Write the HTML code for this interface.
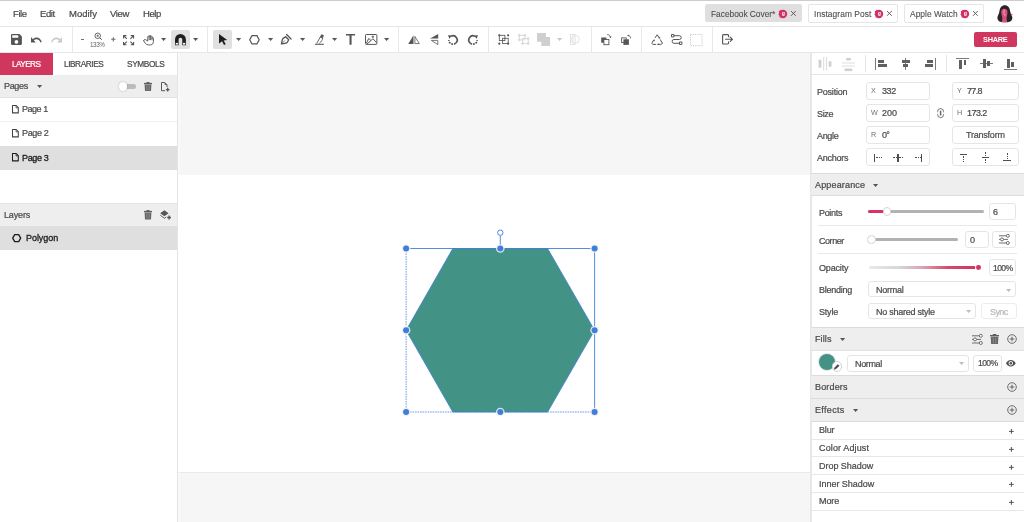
<!DOCTYPE html>
<html>
<head>
<meta charset="utf-8">
<title>Designer</title>
<style>
*{box-sizing:border-box;margin:0;padding:0}
html,body{width:1024px;height:522px;overflow:hidden;background:#fff;font-family:"Liberation Sans",sans-serif;font-size:9px;color:#444}
#app{position:relative;width:1024px;height:522px;overflow:hidden;background:#fff}
.abs{position:absolute}
.t{position:absolute;white-space:nowrap;will-change:transform;line-height:12px;height:12px;-webkit-text-stroke:0.22px currentColor}
svg{position:absolute;overflow:visible}
</style>
</head>
<body>
<div id="app">
<!-- MENU BAR -->
<div class="abs" style="left:0.00px;top:0.00px;width:1024.00px;height:1.00px;background:#cdcdcd;"></div>
<span class="t" style="left:12.80px;top:8.00px;font-size:9.50px;color:#4a4a4a;font-weight:400;letter-spacing:-0.402px;">File</span>
<span class="t" style="left:40.40px;top:8.00px;font-size:9.50px;color:#4a4a4a;font-weight:400;letter-spacing:-0.423px;">Edit</span>
<span class="t" style="left:68.90px;top:8.00px;font-size:9.50px;color:#4a4a4a;font-weight:400;letter-spacing:-0.016px;">Modify</span>
<span class="t" style="left:110.20px;top:8.00px;font-size:9.50px;color:#4a4a4a;font-weight:400;letter-spacing:-0.373px;">View</span>
<span class="t" style="left:142.70px;top:8.00px;font-size:9.50px;color:#4a4a4a;font-weight:400;letter-spacing:-0.412px;">Help</span>
<div class="abs" style="left:0.00px;top:26.00px;width:1024.00px;height:1.00px;background:#e6e6e6;"></div>
<!-- DOC TABS -->
<div class="abs" style="left:705.00px;top:4.30px;width:97.00px;height:18.20px;background:#dfdfdf;border-radius:2px"></div>
<span class="t" style="left:711.00px;top:7.50px;font-size:8.40px;color:#4d4d4d;font-weight:400;letter-spacing:-0.028px;-webkit-text-stroke:0.100px #4d4d4d;">Facebook Cover*</span>
<svg style="left:778.30px;top:8.50px;will-change:transform;" width="10.00" height="10.00" viewBox="-5 -5 10 10"><circle r="4.200" fill="#d22f62"/><circle cx="-3.300" cy="-2.400" r="0.900" fill="#d22f62"/><circle cx="-3.800" cy="0.600" r="0.700" fill="#d22f62"/><circle cx="-2.100" cy="-3.600" r="0.700" fill="#d22f62"/><circle cx="-2.900" cy="2.900" r="0.600" fill="#d22f62"/><text x="0.200" y="1.300" font-family="Liberation Sans, sans-serif" font-size="5.200" font-weight="700" fill="#fff" text-anchor="middle">g</text></svg>
<svg style="left:791.00px;top:11.40px;" width="4.80" height="4.80" viewBox="0 0 4.8 4.8"><path d="M0 0L4.800 4.800M4.800 0L0 4.800" stroke="#555" stroke-width="0.900" fill="none"/></svg>
<div class="abs" style="left:808.00px;top:4.30px;width:90.10px;height:18.50px;background:#fff;border:1px solid #e5e5e5;border-radius:2px;"></div>
<span class="t" style="left:814.00px;top:7.50px;font-size:8.40px;color:#4d4d4d;font-weight:400;letter-spacing:0.078px;-webkit-text-stroke:0.100px #4d4d4d;">Instagram Post</span>
<svg style="left:874.00px;top:8.50px;will-change:transform;" width="10.00" height="10.00" viewBox="-5 -5 10 10"><circle r="4.200" fill="#d22f62"/><circle cx="-3.300" cy="-2.400" r="0.900" fill="#d22f62"/><circle cx="-3.800" cy="0.600" r="0.700" fill="#d22f62"/><circle cx="-2.100" cy="-3.600" r="0.700" fill="#d22f62"/><circle cx="-2.900" cy="2.900" r="0.600" fill="#d22f62"/><text x="0.200" y="1.300" font-family="Liberation Sans, sans-serif" font-size="5.200" font-weight="700" fill="#fff" text-anchor="middle">g</text></svg>
<svg style="left:886.60px;top:11.40px;" width="4.80" height="4.80" viewBox="0 0 4.8 4.8"><path d="M0 0L4.800 4.800M4.800 0L0 4.800" stroke="#555" stroke-width="0.900" fill="none"/></svg>
<div class="abs" style="left:903.50px;top:4.30px;width:80.60px;height:18.50px;background:#fff;border:1px solid #e5e5e5;border-radius:2px;"></div>
<span class="t" style="left:910.00px;top:7.50px;font-size:8.40px;color:#4d4d4d;font-weight:400;letter-spacing:0.039px;-webkit-text-stroke:0.100px #4d4d4d;">Apple Watch</span>
<svg style="left:960.30px;top:8.50px;will-change:transform;" width="10.00" height="10.00" viewBox="-5 -5 10 10"><circle r="4.200" fill="#d22f62"/><circle cx="-3.300" cy="-2.400" r="0.900" fill="#d22f62"/><circle cx="-3.800" cy="0.600" r="0.700" fill="#d22f62"/><circle cx="-2.100" cy="-3.600" r="0.700" fill="#d22f62"/><circle cx="-2.900" cy="2.900" r="0.600" fill="#d22f62"/><text x="0.200" y="1.300" font-family="Liberation Sans, sans-serif" font-size="5.200" font-weight="700" fill="#fff" text-anchor="middle">g</text></svg>
<svg style="left:973.10px;top:11.40px;" width="4.80" height="4.80" viewBox="0 0 4.8 4.8"><path d="M0 0L4.800 4.800M4.800 0L0 4.800" stroke="#555" stroke-width="0.900" fill="none"/></svg>
<svg style="left:997.00px;top:4.80px;" width="16.00" height="17.40" viewBox="0 0 16 17.400"><path d="M7.800 0.200C4.800 0.200 2.900 2.600 2.500 6C2.200 9 0.400 10.500 0.400 12.800C0.400 15.400 2.600 17.200 5 17.200L10.600 17.200C13.400 17.200 15.400 15.400 15.400 12.800C15.400 10.500 13.400 9 13.100 6C12.700 2.600 10.800 0.200 7.800 0.200z" fill="#2b2224"/><path d="M4.300 6.200C4.600 4.300 6 3.700 7.600 3.700C9.500 3.700 10.600 5 10.500 7.200C10.400 9.600 9.800 11.400 9.600 13C9.500 14.600 10.200 15.800 10 16.900C8.200 17.300 6.400 17.300 4.600 16.800C5.200 15.400 5.600 13.800 5.200 12.200C4.800 10.400 4 8.400 4.300 6.200z" fill="#d75079"/><path d="M6.200 5.200L8.200 4.600L7.600 8.400L9.200 9.800L7.400 11L6.400 8.600z" fill="#e98aa8"/><circle cx="14.700" cy="9.600" r="0.900" fill="#e0668a"/></svg>
<!-- TOOLBAR -->
<div class="abs" style="left:0.00px;top:52.00px;width:1024.00px;height:1.00px;background:#e6e6e6;"></div>
<div class="abs" style="left:71.80px;top:27.00px;width:1.00px;height:25.00px;background:#e8e8e8;"></div>
<div class="abs" style="left:207.30px;top:27.00px;width:1.00px;height:25.00px;background:#e8e8e8;"></div>
<div class="abs" style="left:397.80px;top:27.00px;width:1.00px;height:25.00px;background:#e8e8e8;"></div>
<div class="abs" style="left:487.80px;top:27.00px;width:1.00px;height:25.00px;background:#e8e8e8;"></div>
<div class="abs" style="left:590.70px;top:27.00px;width:1.00px;height:25.00px;background:#e8e8e8;"></div>
<div class="abs" style="left:640.90px;top:27.00px;width:1.00px;height:25.00px;background:#e8e8e8;"></div>
<div class="abs" style="left:711.70px;top:27.00px;width:1.00px;height:25.00px;background:#e8e8e8;"></div>
<svg style="left:11.20px;top:34.10px" width="10.90" height="11.00" viewBox="3 3 18 18" preserveAspectRatio="none"><path d="M17 3H5c-1.110 0-2 .9-2 2v14c0 1.100.890 2 2 2h14c1.100 0 2-.9 2-2V7l-4-4zm-5 16c-1.660 0-3-1.340-3-3s1.340-3 3-3 3 1.340 3 3-1.340 3-3 3zm3-10H5V5h10v4z" fill="#565656"/></svg>
<svg style="left:31.00px;top:37.00px" width="10.80" height="5.80" viewBox="2 7 20.5 9.5" preserveAspectRatio="none"><path d="M12.500 8c-2.650 0-5.050.990-6.900 2.600L2 7v9h9l-3.620-3.620c1.390-1.160 3.160-1.880 5.120-1.880 3.540 0 6.550 2.310 7.600 5.500l2.370-.780C21.080 11.030 17.150 8 12.500 8z" fill="#565656"/></svg>
<svg style="left:51.20px;top:37.00px" width="11.00" height="5.80" viewBox="1.5 7 20.5 9.5" preserveAspectRatio="none"><path d="M18.400 10.600C16.550 8.990 14.150 8 11.500 8c-4.650 0-8.580 3.030-9.960 7.220L3.900 16c1.050-3.190 4.050-5.500 7.600-5.500 1.950 0 3.730.720 5.120 1.880L13 16h9V7l-3.600 3.600z" fill="#c9c9c9"/></svg>
<div class="abs" style="left:81.20px;top:39.00px;width:3.20px;height:1.10px;background:#707070;"></div>
<svg style="left:93.50px;top:31.50px;" width="9.00" height="9.00" viewBox="0 0 9 9"><circle cx="3.700" cy="3.800" r="2.750" fill="none" stroke="#565656" stroke-width="0.900"/><path d="M5.700 5.800L7.800 7.700" stroke="#565656" stroke-width="1"/><path d="M2.400 3.800h2.600M3.700 2.500v2.600" stroke="#565656" stroke-width="0.700"/></svg>
<span class="t" style="left:90.20px;top:38.90px;font-size:6.30px;color:#666;font-weight:400;letter-spacing:-0.437px;-webkit-text-stroke:0;">133%</span>
<svg style="left:110.90px;top:37.40px;" width="4.60" height="4.60" viewBox="0 0 4.600 4.600"><path d="M2.300 0.200v4.200M0.200 2.300h4.200" stroke="#6a6a6a" stroke-width="1.050"/></svg>
<svg style="left:122.80px;top:34.60px;" width="11.20" height="10.40" viewBox="0 0 11.200 10.400"><g stroke="#565656" stroke-width="1.100" fill="none"><path d="M0.600 3.400V0.600H3.400M0.600 0.600L3.800 3.800"/><path d="M10.600 3.400V0.600H7.800M10.600 0.600L7.400 3.800"/><path d="M0.600 7V9.800H3.400M0.600 9.800L3.800 6.600"/><path d="M10.600 7V9.800H7.800M10.600 9.800L7.400 6.600"/></g></svg>
<svg style="left:142.90px;top:34.50px;" width="11.00" height="10.40" viewBox="0 0 11 10.400"><path d="M0.700 5.700C1.500 7.500 2.800 9.800 5.200 9.900H7.600C9.400 9.900 10.400 8.400 10.400 6.600V3.100C10.400 2.200 9 2.200 9 3.100V4.900M9 3.100V1.700C9 0.800 7.600 0.800 7.600 1.700V4.700M7.600 1.700V1.100C7.600 0.200 6.200 0.200 6.200 1.100V4.700M6.200 1.700C6.200 0.800 4.800 0.800 4.800 1.700V6.100L2.700 4.700C1.900 4.200 0.300 4.800 0.700 5.700" fill="none" stroke="#565656" stroke-width="0.950" stroke-linecap="round" stroke-linejoin="round"/></svg>
<svg style="left:161.40px;top:38.10px;" width="5.20" height="3.00" viewBox="0 0 5.2 3"><path d="M0 0h5.2L2.600 3z" fill="#555"/></svg>
<div class="abs" style="left:171.00px;top:30.00px;width:18.60px;height:19.00px;background:#e0e0e0;border-radius:2px"></div>
<svg style="left:174.70px;top:34.10px;" width="10.90" height="11.20" viewBox="0 0 10.900 11.200"><path d="M0 11.200V5.450a5.450 5.450 0 0 1 10.900 0V11.200H7.300V5.600a1.850 1.850 0 0 0-3.700 0V11.200z" fill="#1e1e1e"/><rect x="0.700" y="8.900" width="2.200" height="1.700" fill="#fff"/><rect x="8" y="8.900" width="2.200" height="1.700" fill="#fff"/></svg>
<svg style="left:193.40px;top:38.10px;" width="5.20" height="3.00" viewBox="0 0 5.2 3"><path d="M0 0h5.2L2.600 3z" fill="#555"/></svg>
<div class="abs" style="left:213.40px;top:30.00px;width:18.80px;height:19.00px;background:#e0e0e0;border-radius:2px"></div>
<svg style="left:218.90px;top:34.10px;" width="8.20" height="11.00" viewBox="0 0 8.200 11"><path d="M0 0L8.200 6.100L4.700 6.600L6.700 10.300L5 11L3.100 7.300L0 9.400z" fill="#1e1e1e"/></svg>
<svg style="left:235.80px;top:38.10px;" width="5.20" height="3.00" viewBox="0 0 5.2 3"><path d="M0 0h5.2L2.600 3z" fill="#555"/></svg>
<svg style="left:249.40px;top:34.90px;" width="10.90" height="9.60" viewBox="0 0 10.900 9.600"><path d="M3 0.650H7.900L10.200 4.800L7.900 8.950H3L0.700 4.800z" fill="none" stroke="#565656" stroke-width="1.250" stroke-linejoin="round"/></svg>
<svg style="left:267.90px;top:38.10px;" width="5.20" height="3.00" viewBox="0 0 5.2 3"><path d="M0 0h5.2L2.600 3z" fill="#555"/></svg>
<svg style="left:281.30px;top:34.20px;" width="10.60" height="10.40" viewBox="0 0 10.600 10.400"><g fill="none" stroke="#565656" stroke-linejoin="round" stroke-linecap="round"><path d="M5.600 0.500L10.100 5" stroke-width="1.250"/><path d="M0.500 9.900C0.800 7 1.300 5.200 2 4.300L4.700 2.800L7.700 5.800L6.200 8.500C5.300 9.200 3.400 9.600 0.500 9.900z" stroke-width="1.350"/><path d="M0.500 9.900L3.700 6.700" stroke-width="0.800"/></g></svg>
<svg style="left:299.90px;top:38.10px;" width="5.20" height="3.00" viewBox="0 0 5.2 3"><path d="M0 0h5.2L2.600 3z" fill="#555"/></svg>
<svg style="left:314.50px;top:34.20px;" width="9.20" height="10.80" viewBox="0 0 9.200 10.800"><g fill="none" stroke="#565656" stroke-linejoin="round"><path d="M0 10.300H8.800" stroke-width="1.100"/><path d="M1.700 9.400L5.300 3L7.500 4C7.700 5.700 6.500 7.600 4.300 9.400" stroke-width="0.900"/><path d="M5.300 3L6.600 0.500L8.600 1.500L7.500 4z" fill="#565656" stroke-width="0.600"/></g></svg>
<svg style="left:331.90px;top:38.10px;" width="5.20" height="3.00" viewBox="0 0 5.2 3"><path d="M0 0h5.2L2.600 3z" fill="#555"/></svg>
<svg style="left:346.30px;top:34.30px;" width="9.10" height="10.70" viewBox="0 0 9.100 10.700"><path d="M0 0H9.100V1.600H5.600V10.700H3.500V1.600H0z" fill="#565656"/></svg>
<svg style="left:364.60px;top:34.10px;" width="12.40" height="10.90" viewBox="0 0 12.400 10.900"><g fill="none" stroke="#565656" stroke-width="1" stroke-linejoin="round"><rect x="0.500" y="0.500" width="11.400" height="9.900" rx="0.800"/><path d="M1.200 9.600L3.800 4.400L6 6.600L1.900 10M6 6.600L7.900 4.700L11.600 8.800"/><circle cx="7.900" cy="2.700" r="0.800"/></g></svg>
<svg style="left:383.80px;top:38.10px;" width="5.20" height="3.00" viewBox="0 0 5.2 3"><path d="M0 0h5.2L2.600 3z" fill="#555"/></svg>
<svg style="left:407.90px;top:35.00px;" width="12.20" height="9.20" viewBox="0 0 12.200 9.200"><path d="M0.200 9H5.500V0.300z" fill="#565656"/><path d="M6.900 1.500V8.600H11.300z" fill="none" stroke="#565656" stroke-width="0.800" stroke-linejoin="round"/></svg>
<svg style="left:430.20px;top:33.70px;" width="8.30" height="11.20" viewBox="0 0 8.300 11.200"><path d="M8.200 0V4.600H0z" fill="#565656"/><path d="M7.800 6.400V10.600L1.400 6.400z" fill="none" stroke="#565656" stroke-width="0.800" stroke-linejoin="round"/></svg>
<svg style="left:447.20px;top:34.40px;" width="12.00" height="12.00" viewBox="-6 -6 12 12"><g><path d="M-1.800 -3.750A4.150 4.150 0 0 1 2.700 3.150" fill="none" stroke="#565656" stroke-width="1.650"/><path d="M2.700 3.150A4.150 4.150 0 0 1 -4.150 0" fill="none" stroke="#565656" stroke-width="1.650" stroke-dasharray="1.900 0.900"/><path d="M-4.800 -5.100L-0.800 -4.300L-3.900 -1.300z" fill="#565656"/></g></svg>
<svg style="left:467.20px;top:34.40px;" width="12.00" height="12.00" viewBox="-6 -6 12 12"><g transform="scale(-1 1)"><path d="M-1.800 -3.750A4.150 4.150 0 0 1 2.700 3.150" fill="none" stroke="#565656" stroke-width="1.650"/><path d="M2.700 3.150A4.150 4.150 0 0 1 -4.150 0" fill="none" stroke="#565656" stroke-width="1.650" stroke-dasharray="1.900 0.900"/><path d="M-4.800 -5.100L-0.800 -4.300L-3.900 -1.300z" fill="#565656"/></g></svg>
<svg style="left:498.00px;top:34.30px;" width="11.40" height="11.00" viewBox="0 0 11.400 11"><g fill="none" stroke="#565656" stroke-width="0.850"><rect x="1.300" y="1.300" width="5.600" height="5.300"/><rect x="4.600" y="4.300" width="5.600" height="5.300"/></g><g fill="#565656"><circle cx="1.300" cy="1.300" r="1.100"/><circle cx="10.100" cy="1.300" r="1.100"/><circle cx="1.300" cy="9.700" r="1.100"/><circle cx="10.100" cy="9.700" r="1.100"/></g></svg>
<svg style="left:518.00px;top:34.30px;" width="11.40" height="11.00" viewBox="0 0 11.400 11"><g fill="none" stroke="#d3d3d3" stroke-width="0.800"><rect x="1.300" y="1.300" width="5.600" height="4.600"/><rect x="4.600" y="4.600" width="5.600" height="4.900"/><circle cx="1.300" cy="1.300" r="1"/><circle cx="6.900" cy="1.300" r="1"/><circle cx="1.300" cy="5.900" r="1"/><circle cx="10.200" cy="4.600" r="1"/><circle cx="4.600" cy="9.500" r="1"/><circle cx="10.200" cy="9.500" r="1"/></g></svg>
<svg style="left:537.10px;top:33.10px;" width="13.10" height="12.90" viewBox="0 0 13.100 12.900"><path d="M0 0H8.900V4.100H13.100V12.900H4.300V8.700H0z" fill="#cfcfcf"/></svg>
<svg style="left:556.70px;top:38.10px;" width="5.20" height="3.00" viewBox="0 0 5.2 3"><path d="M0 0h5.2L2.600 3z" fill="#c6c6c6"/></svg>
<svg style="left:570.30px;top:34.30px;" width="9.80" height="10.80" viewBox="0 0 9.800 10.800"><g fill="none" stroke="#dcdcdc" stroke-width="0.800"><rect x="0.500" y="0.500" width="4.600" height="9.800"/><circle cx="5.300" cy="5.400" r="4"/><path d="M3 2.200V8.600"/></g></svg>
<svg style="left:600.80px;top:33.90px;" width="10.40" height="11.10" viewBox="0 0 10.400 11.100"><rect x="0.200" y="3.500" width="5.200" height="5.200" fill="#565656"/><rect x="2.900" y="5.500" width="5" height="5.200" fill="#fff" stroke="#565656" stroke-width="0.900"/><path d="M6.200 0.600C8 0.600 9.200 1.600 9.500 3.200" fill="none" stroke="#565656" stroke-width="0.900"/><path d="M8.300 2.700L10.400 2.500L9.500 4.300z" fill="#565656"/></svg>
<svg style="left:621.00px;top:33.90px;" width="10.40" height="11.10" viewBox="0 0 10.400 11.100"><rect x="0.600" y="3.900" width="4.600" height="4.600" fill="none" stroke="#565656" stroke-width="0.900"/><rect x="2.400" y="5.300" width="5.500" height="5.600" fill="#565656"/><path d="M9.600 4.400C9.800 2.800 8.800 1.700 7.200 1.500" fill="none" stroke="#565656" stroke-width="0.900"/><path d="M7.800 0.400L6.200 1.500L7.900 2.500z" fill="#565656"/></svg>
<svg style="left:650.70px;top:33.90px;" width="12.30" height="11.10" viewBox="0 0 12.300 11.100"><g fill="none" stroke="#565656" stroke-width="1" stroke-linejoin="round" stroke-linecap="round"><path d="M4.300 3.600L6.200 0.700L8.200 3.900"/><path d="M9.400 5.800L11.500 9.400L9.800 10.400H7"/><path d="M4.700 10.400H1.800L0.800 9.200L2.700 6"/></g><g fill="#565656"><path d="M7.300 4.600L9.400 4.300L8.900 2.400z"/><path d="M7.500 9.200V11.100L5.900 10.300z"/><path d="M1.700 6.800L3.700 5.400L3.600 7.400z"/></g></svg>
<svg style="left:670.90px;top:34.40px;" width="11.40" height="10.90" viewBox="0 0 11.400 10.900"><g fill="none" stroke="#565656" stroke-width="1" stroke-linejoin="round"><rect x="0.500" y="0.500" width="2.400" height="2.400"/><rect x="8.500" y="8" width="2.400" height="2.400"/><path d="M2.900 1.700H8.300A1.900 1.900 0 0 1 8.300 5.500H3A1.900 1.900 0 0 0 3 9.300H8.500"/></g></svg>
<svg style="left:690.40px;top:33.60px;" width="12.60" height="12.20" viewBox="0 0 12.600 12.200"><rect x="0.500" y="0.500" width="11.600" height="11.200" fill="none" stroke="#c4c4c4" stroke-width="0.900" stroke-dasharray="1.200 1"/></svg>
<svg style="left:721.60px;top:34.40px;" width="11.40" height="10.60" viewBox="0 0 11.400 10.600"><g fill="none" stroke="#565656" stroke-width="1.150" stroke-linejoin="round" stroke-linecap="round"><path d="M6.600 2.700V1.500A0.900 0.900 0 0 0 5.700 0.600H1.500A0.900 0.900 0 0 0 0.600 1.500V9.100A0.900 0.900 0 0 0 1.500 10H5.700A0.900 0.900 0 0 0 6.600 9.100V7.900"/><path d="M3.600 5.300H10.400M8.300 3.200L10.500 5.300L8.300 7.400"/></g></svg>
<div class="abs" style="left:974.30px;top:32.20px;width:42.70px;height:14.80px;background:#d1365f;border-radius:2px"></div>
<span class="t" style="left:983.00px;top:34.40px;font-size:7.40px;color:#fff;font-weight:700;letter-spacing:-0.301px;-webkit-text-stroke:0;">SHARE</span>
<!-- LEFT PANEL -->
<div class="abs" style="left:177.00px;top:53.00px;width:1.00px;height:469.00px;background:#e4e4e4;"></div>
<div class="abs" style="left:0.00px;top:52.60px;width:52.60px;height:22.00px;background:#d1365f;"></div>
<span class="t" style="left:12.00px;top:58.20px;font-size:8.30px;color:#fff;font-weight:400;letter-spacing:-0.628px;">LAYERS</span>
<span class="t" style="left:64.20px;top:58.20px;font-size:8.30px;color:#4a4a4a;font-weight:400;letter-spacing:-0.445px;">LIBRARIES</span>
<span class="t" style="left:127.40px;top:58.20px;font-size:8.30px;color:#4a4a4a;font-weight:400;letter-spacing:-0.388px;">SYMBOLS</span>
<div class="abs" style="left:0.00px;top:74.60px;width:177.00px;height:22.60px;background:#eeeeee;"></div>
<div class="abs" style="left:0.00px;top:97.00px;width:177.00px;height:1.00px;background:#e2e2e2;"></div>
<span class="t" style="left:3.90px;top:80.00px;font-size:9.00px;color:#4a4a4a;font-weight:400;letter-spacing:-0.329px;">Pages</span>
<svg style="left:36.90px;top:84.90px;" width="5.20" height="3.00" viewBox="0 0 5.2 3"><path d="M0 0h5.2L2.600 3z" fill="#555"/></svg>
<div class="abs" style="left:123.00px;top:83.70px;width:12.80px;height:5.30px;background:#bcbcbc;border-radius:2.650px"></div>
<div class="abs" style="left:118.6px;top:81.9px;width:8.800px;height:8.800px;border-radius:50%;background:#fff;box-shadow:0 0 1.5px rgba(0,0,0,.35)"></div>
<svg style="left:143.80px;top:81.50px;overflow:hidden;" width="8.00" height="9.40" preserveAspectRatio="none" viewBox="0 0 8 9.400"><rect x="0" y="0.900" width="8" height="1.300" fill="#5e5e5e"/><rect x="2.500" y="0" width="3" height="1.200" fill="#5e5e5e"/><path d="M0.600 2.500H7.400L7 9.400H1z" fill="#666"/><path d="M2.900 3.300V8.700M5.100 3.300V8.700" stroke="#9c9c9c" stroke-width="0.650"/></svg>
<svg style="left:161.30px;top:82.30px;" width="8.60" height="9.50" viewBox="0 0 8.600 9.500"><path d="M6 5.200V2.800L3.800 0.500H0.500V8.700H4" fill="none" stroke="#565656" stroke-width="1" stroke-linejoin="round"/><path d="M3.700 0.400L6.100 2.900H3.700z" fill="#565656"/><path d="M6.700 5.800V9.500M4.850 7.650H8.550" stroke="#565656" stroke-width="1.400"/></svg>
<svg style="left:12.40px;top:105.20px;" width="6.80" height="8.40" viewBox="0 0 6.800 8.400"><path d="M0.500 0.500H4.200L6.300 2.700V7.900H0.500z" fill="none" stroke="#444" stroke-width="1.050" stroke-linejoin="round"/><path d="M4.100 0.600V2.900H6.200" fill="none" stroke="#444" stroke-width="0.800"/></svg>
<span class="t" style="left:22.40px;top:103.20px;font-size:9.00px;color:#4a4a4a;font-weight:400;letter-spacing:-0.465px;">Page 1</span>
<div class="abs" style="left:0.00px;top:121.30px;width:177.00px;height:1.00px;background:#efefef;"></div>
<svg style="left:12.40px;top:129.30px;" width="6.80" height="8.40" viewBox="0 0 6.800 8.400"><path d="M0.500 0.500H4.200L6.300 2.700V7.900H0.500z" fill="none" stroke="#444" stroke-width="1.050" stroke-linejoin="round"/><path d="M4.100 0.600V2.900H6.200" fill="none" stroke="#444" stroke-width="0.800"/></svg>
<span class="t" style="left:22.40px;top:127.30px;font-size:9.00px;color:#4a4a4a;font-weight:400;letter-spacing:-0.345px;">Page 2</span>
<div class="abs" style="left:0.00px;top:146.00px;width:177.00px;height:24.40px;background:#dfdfdf;"></div>
<svg style="left:12.40px;top:153.40px;" width="6.80" height="8.40" viewBox="0 0 6.800 8.400"><path d="M0.500 0.500H4.200L6.300 2.700V7.900H0.500z" fill="none" stroke="#1c1c1c" stroke-width="1.050" stroke-linejoin="round"/><path d="M4.100 0.600V2.900H6.200" fill="none" stroke="#1c1c1c" stroke-width="0.800"/></svg>
<span class="t" style="left:22.40px;top:151.50px;font-size:9.00px;color:#1c1c1c;font-weight:400;letter-spacing:-0.345px;-webkit-text-stroke:0.300px #1c1c1c;">Page 3</span>
<div class="abs" style="left:0.00px;top:203.40px;width:177.00px;height:22.80px;background:#eeeeee;"></div>
<div class="abs" style="left:0.00px;top:203.00px;width:177.00px;height:1.00px;background:#e4e4e4;"></div>
<span class="t" style="left:3.90px;top:209.00px;font-size:9.00px;color:#4a4a4a;font-weight:400;letter-spacing:-0.142px;">Layers</span>
<svg style="left:143.80px;top:210.20px;overflow:hidden;" width="8.00" height="9.40" preserveAspectRatio="none" viewBox="0 0 8 9.400"><rect x="0" y="0.900" width="8" height="1.300" fill="#5e5e5e"/><rect x="2.500" y="0" width="3" height="1.200" fill="#5e5e5e"/><path d="M0.600 2.500H7.400L7 9.400H1z" fill="#666"/><path d="M2.900 3.300V8.700M5.100 3.300V8.700" stroke="#9c9c9c" stroke-width="0.650"/></svg>
<svg style="left:159.60px;top:210.40px;" width="11.00" height="9.60" viewBox="0 0 11 9.600"><path d="M4.400 0.200L8.600 3.200L4.400 6.200L0.200 3.200z" fill="#565656"/><path d="M0.300 5.300L4.500 8.300L6.300 7" fill="none" stroke="#565656" stroke-width="0.900"/><path d="M9.100 5.600V9.400M7.200 7.500H11" stroke="#565656" stroke-width="1.400"/></svg>
<div class="abs" style="left:0.00px;top:226.20px;width:177.00px;height:24.30px;background:#dfdfdf;"></div>
<svg style="left:11.80px;top:233.80px;" width="9.40" height="8.30" viewBox="0 0 9.400 8.300"><path d="M2.700 0.650H6.700L8.700 4.150L6.700 7.650H2.700L0.700 4.150z" fill="none" stroke="#1c1c1c" stroke-width="1.300" stroke-linejoin="round"/></svg>
<span class="t" style="left:25.80px;top:231.70px;font-size:9.00px;color:#1c1c1c;font-weight:400;letter-spacing:-0.054px;-webkit-text-stroke:0.300px #1c1c1c;">Polygon</span>
<!-- CANVAS -->
<div class="abs" style="left:178.00px;top:53.00px;width:632.00px;height:469.00px;background:#f6f6f6;"></div>
<div class="abs" style="left:178.00px;top:174.80px;width:632.00px;height:297.40px;background:#ffffff;"></div>
<div class="abs" style="left:178.00px;top:472.20px;width:632.00px;height:1.00px;background:#eaeaea;"></div>
<div class="abs" style="left:178.00px;top:53.00px;width:2.00px;height:469.00px;background:rgba(255,255,255,0.35);"></div>
<svg style="left:0.00px;top:0.00px;" width="1024.00" height="522.00" viewBox="0 0 1024 522"><polygon points="406.10,330.30 452.80,248.50 547.60,248.50 594.60,330.30 547.60,412.00 452.80,412.00" fill="#429386" stroke="#3f7fdc" stroke-width="0.800"/><path d="M406.100 248.500H594.600V412" fill="none" stroke="#3f7fdc" stroke-width="0.900"/><path d="M406.100 248.500V412H594.600" fill="none" stroke="#3f7fdc" stroke-width="0.900" stroke-dasharray="1.600 0.900" stroke-opacity="0.850"/><path d="M500.300 248.500V235.800" stroke="#3f7fdc" stroke-width="0.900"/><circle cx="500.300" cy="232.700" r="2.700" fill="#fff" stroke="#3f7fdc" stroke-width="0.950"/><circle cx="406.10" cy="248.50" r="4.300" fill="#f0f0f0" fill-opacity="0.900"/><circle cx="406.10" cy="248.50" r="3" fill="#3f7fdc"/><circle cx="500.30" cy="248.50" r="4.300" fill="#f0f0f0" fill-opacity="0.900"/><circle cx="500.30" cy="248.50" r="3" fill="#3f7fdc"/><circle cx="594.60" cy="248.50" r="4.300" fill="#f0f0f0" fill-opacity="0.900"/><circle cx="594.60" cy="248.50" r="3" fill="#3f7fdc"/><circle cx="406.10" cy="330.30" r="4.300" fill="#f0f0f0" fill-opacity="0.900"/><circle cx="406.10" cy="330.30" r="3" fill="#3f7fdc"/><circle cx="594.60" cy="330.30" r="4.300" fill="#f0f0f0" fill-opacity="0.900"/><circle cx="594.60" cy="330.30" r="3" fill="#3f7fdc"/><circle cx="406.10" cy="412.00" r="4.300" fill="#f0f0f0" fill-opacity="0.900"/><circle cx="406.10" cy="412.00" r="3" fill="#3f7fdc"/><circle cx="500.30" cy="412.00" r="4.300" fill="#f0f0f0" fill-opacity="0.900"/><circle cx="500.30" cy="412.00" r="3" fill="#3f7fdc"/><circle cx="594.60" cy="412.00" r="4.300" fill="#f0f0f0" fill-opacity="0.900"/><circle cx="594.60" cy="412.00" r="3" fill="#3f7fdc"/></svg>
<!-- RIGHT PANEL -->
<div class="abs" style="left:810.00px;top:53.00px;width:214.00px;height:469.00px;background:#fff;"></div>
<div class="abs" style="left:810.00px;top:53.00px;width:1.50px;height:469.00px;background:#e7e7e7;"></div>
<div class="abs" style="left:811.00px;top:74.20px;width:213.00px;height:1.00px;background:#e4e4e4;"></div>
<svg style="left:817.70px;top:58.00px;" width="14.30" height="11.60" viewBox="0 0 14.300 11.600"><rect x="0.600" y="1.800" width="2.800" height="7.800" fill="#cfcfcf"/><rect x="10.700" y="3.300" width="2.700" height="5.400" fill="#cfcfcf"/><path d="M5.700 -0.800V12.500M8.600 -0.800V12.500" stroke="#cfcfcf" stroke-width="0.800"/></svg>
<svg style="left:842.20px;top:57.50px;" width="12.80" height="13.10" viewBox="0 0 12.800 13.100"><rect x="4.200" y="0" width="4.600" height="2.400" fill="#cfcfcf"/><rect x="2.600" y="10.500" width="7.600" height="2.600" fill="#cfcfcf"/><path d="M0 5H12.800M0 8H12.800" stroke="#cfcfcf" stroke-width="0.700"/></svg>
<div class="abs" style="left:864.80px;top:55.00px;width:1.00px;height:17.00px;background:#e6e6e6;"></div>
<div class="abs" style="left:946.10px;top:55.00px;width:1.00px;height:17.00px;background:#e6e6e6;"></div>
<div class="abs" style="left:875.20px;top:58.00px;width:0.90px;height:11.60px;background:#7a7a7a;"></div>
<div class="abs" style="left:878.00px;top:60.00px;width:5.70px;height:2.80px;background:#606060;"></div>
<div class="abs" style="left:878.00px;top:64.30px;width:8.90px;height:2.80px;background:#606060;"></div>
<div class="abs" style="left:905.00px;top:58.00px;width:0.90px;height:11.60px;background:#7a7a7a;"></div>
<div class="abs" style="left:901.80px;top:60.00px;width:7.90px;height:2.80px;background:#606060;"></div>
<div class="abs" style="left:902.90px;top:64.30px;width:5.30px;height:2.80px;background:#606060;"></div>
<div class="abs" style="left:934.80px;top:58.00px;width:0.90px;height:11.60px;background:#7a7a7a;"></div>
<div class="abs" style="left:927.40px;top:60.00px;width:5.70px;height:2.80px;background:#606060;"></div>
<div class="abs" style="left:924.60px;top:64.30px;width:8.50px;height:2.80px;background:#606060;"></div>
<div class="abs" style="left:956.10px;top:57.50px;width:12.80px;height:0.90px;background:#7a7a7a;"></div>
<div class="abs" style="left:959.30px;top:60.00px;width:3.20px;height:8.50px;background:#606060;"></div>
<div class="abs" style="left:964.00px;top:60.00px;width:2.30px;height:5.30px;background:#606060;"></div>
<div class="abs" style="left:980.00px;top:63.00px;width:12.70px;height:0.90px;background:#7a7a7a;"></div>
<div class="abs" style="left:982.70px;top:59.00px;width:3.20px;height:9.00px;background:#606060;"></div>
<div class="abs" style="left:987.40px;top:60.60px;width:2.80px;height:5.80px;background:#606060;"></div>
<div class="abs" style="left:1004.00px;top:68.80px;width:12.80px;height:0.90px;background:#7a7a7a;"></div>
<div class="abs" style="left:1006.60px;top:59.00px;width:3.10px;height:8.50px;background:#606060;"></div>
<div class="abs" style="left:1011.00px;top:61.70px;width:3.00px;height:5.80px;background:#606060;"></div>
<span class="t" style="left:816.60px;top:85.60px;font-size:9.00px;color:#4a4a4a;font-weight:400;letter-spacing:-0.217px;">Position</span>
<div class="abs" style="left:866.30px;top:82.00px;width:64.10px;height:17.60px;background:#fff;border:1px solid #e5e5e5;border-radius:3px;"></div>
<span class="t" style="left:871.00px;top:84.80px;font-size:7.20px;color:#707070;font-weight:400;-webkit-text-stroke:0;">X</span>
<span class="t" style="left:882.00px;top:84.80px;font-size:9.00px;color:#4a4a4a;font-weight:400;letter-spacing:-0.407px;">332</span>
<div class="abs" style="left:951.80px;top:82.00px;width:67.60px;height:17.60px;background:#fff;border:1px solid #e5e5e5;border-radius:3px;"></div>
<span class="t" style="left:956.50px;top:84.80px;font-size:7.20px;color:#707070;font-weight:400;-webkit-text-stroke:0;">Y</span>
<span class="t" style="left:966.70px;top:84.80px;font-size:9.00px;color:#4a4a4a;font-weight:400;letter-spacing:-0.638px;">77.8</span>
<span class="t" style="left:816.60px;top:107.60px;font-size:9.00px;color:#4a4a4a;font-weight:400;letter-spacing:-0.336px;">Size</span>
<div class="abs" style="left:866.30px;top:104.00px;width:64.10px;height:17.60px;background:#fff;border:1px solid #e5e5e5;border-radius:3px;"></div>
<span class="t" style="left:871.00px;top:107.00px;font-size:7.20px;color:#707070;font-weight:400;-webkit-text-stroke:0;">W</span>
<span class="t" style="left:881.60px;top:107.00px;font-size:9.00px;color:#4a4a4a;font-weight:400;letter-spacing:-0.057px;">200</span>
<div class="abs" style="left:951.80px;top:104.00px;width:67.60px;height:17.60px;background:#fff;border:1px solid #e5e5e5;border-radius:3px;"></div>
<span class="t" style="left:956.50px;top:107.00px;font-size:7.20px;color:#707070;font-weight:400;-webkit-text-stroke:0;">H</span>
<span class="t" style="left:966.70px;top:107.00px;font-size:9.00px;color:#4a4a4a;font-weight:400;letter-spacing:-0.555px;">173.2</span>
<svg style="left:936.70px;top:107.50px;" width="7.20" height="10.20" viewBox="0 0 7.200 10.200"><path d="M0.600 4.300V3.600A3 3 0 0 1 6.600 3.600V4.300M0.600 5.900V6.600A3 3 0 0 0 6.600 6.600V5.900" fill="none" stroke="#666" stroke-width="0.900"/><path d="M3.600 2.700V7.500" stroke="#666" stroke-width="1.500"/></svg>
<span class="t" style="left:816.60px;top:129.80px;font-size:9.00px;color:#4a4a4a;font-weight:400;letter-spacing:-0.329px;">Angle</span>
<div class="abs" style="left:866.30px;top:126.00px;width:64.10px;height:17.60px;background:#fff;border:1px solid #e5e5e5;border-radius:3px;"></div>
<span class="t" style="left:871.00px;top:129.00px;font-size:7.20px;color:#707070;font-weight:400;-webkit-text-stroke:0;">R</span>
<span class="t" style="left:881.60px;top:129.00px;font-size:9.00px;color:#4a4a4a;font-weight:400;letter-spacing:-0.703px;">0°</span>
<div class="abs" style="left:951.80px;top:126.00px;width:67.60px;height:17.60px;background:#fff;border:1px solid #e5e5e5;border-radius:3px;"></div>
<span class="t" style="left:966.10px;top:129.20px;font-size:9.00px;color:#4a4a4a;font-weight:400;letter-spacing:-0.221px;-webkit-text-stroke:0.200px #4a4a4a;">Transform</span>
<span class="t" style="left:816.60px;top:151.80px;font-size:9.00px;color:#4a4a4a;font-weight:400;letter-spacing:-0.252px;">Anchors</span>
<div class="abs" style="left:866.30px;top:148.00px;width:64.10px;height:17.60px;background:#fff;border:1px solid #e5e5e5;border-radius:3px;"></div>
<div class="abs" style="left:951.80px;top:148.00px;width:67.60px;height:17.60px;background:#fff;border:1px solid #e5e5e5;border-radius:3px;"></div>
<div class="abs" style="left:873.50px;top:153.50px;width:1.30px;height:8.00px;background:#4f4f4f;"></div>
<div class="abs" style="left:875.7px;top:157.1px;width:6px;border-top:1px dotted #4f4f4f"></div>
<div class="abs" style="left:897.40px;top:153.50px;width:1.30px;height:8.00px;background:#4f4f4f;"></div>
<div class="abs" style="left:893.3px;top:157.1px;width:3.6px;border-top:1px dotted #4f4f4f"></div>
<div class="abs" style="left:899.3px;top:157.1px;width:3.6px;border-top:1px dotted #4f4f4f"></div>
<div class="abs" style="left:921.00px;top:153.50px;width:1.30px;height:8.00px;background:#4f4f4f;"></div>
<div class="abs" style="left:914.6px;top:157.1px;width:6px;border-top:1px dotted #4f4f4f"></div>
<div class="abs" style="left:959.70px;top:153.50px;width:7.60px;height:1.40px;background:#4f4f4f;"></div>
<div class="abs" style="left:963px;top:155.6px;height:6px;border-left:1px dotted #4f4f4f"></div>
<div class="abs" style="left:981.60px;top:156.80px;width:7.60px;height:1.40px;background:#4f4f4f;"></div>
<div class="abs" style="left:984.9px;top:152.4px;height:4px;border-left:1px dotted #4f4f4f"></div>
<div class="abs" style="left:984.9px;top:158.6px;height:4px;border-left:1px dotted #4f4f4f"></div>
<div class="abs" style="left:1003.40px;top:159.80px;width:7.60px;height:1.40px;background:#4f4f4f;"></div>
<div class="abs" style="left:1006.7px;top:153.4px;height:6px;border-left:1px dotted #4f4f4f"></div>
<div class="abs" style="left:811.00px;top:173.00px;width:213.00px;height:22.60px;background:#eeeeee;"></div>
<div class="abs" style="left:811.00px;top:172.70px;width:213.00px;height:1.00px;background:#dcdcdc;"></div>
<div class="abs" style="left:811.00px;top:195.00px;width:213.00px;height:1.00px;background:#dcdcdc;"></div>
<span class="t" style="left:815.00px;top:178.60px;font-size:9.00px;color:#4a4a4a;font-weight:400;letter-spacing:0.163px;">Appearance</span>
<svg style="left:873.20px;top:183.50px;" width="5.20" height="3.00" viewBox="0 0 5.2 3"><path d="M0 0h5.2L2.600 3z" fill="#555"/></svg>
<span class="t" style="left:818.80px;top:206.90px;font-size:9.00px;color:#4a4a4a;font-weight:400;letter-spacing:-0.323px;">Points</span>
<div class="abs" style="left:868.20px;top:210.10px;width:116.20px;height:3.30px;background:#b2b2b2;border-radius:1.650px"></div>
<div class="abs" style="left:868.20px;top:210.10px;width:19.00px;height:3.30px;background:#d6336c;border-radius:1.650px"></div>
<div class="abs" style="left:882.5px;top:207.300px;width:8.800px;height:8.800px;border-radius:50%;background:#fff;border:1px solid #d4d4d4"></div>
<div class="abs" style="left:988.70px;top:203.00px;width:27.80px;height:17.20px;background:#fff;border:1px solid #e5e5e5;border-radius:3px;"></div>
<span class="t" style="left:993.00px;top:206.20px;font-size:9.00px;color:#4a4a4a;font-weight:400;">6</span>
<div class="abs" style="left:818.30px;top:225.00px;width:198.50px;height:1.00px;background:#e8e8e8;"></div>
<span class="t" style="left:818.80px;top:234.50px;font-size:9.00px;color:#4a4a4a;font-weight:400;letter-spacing:-0.442px;">Corner</span>
<div class="abs" style="left:871.00px;top:238.00px;width:86.70px;height:3.30px;background:#b2b2b2;border-radius:1.650px"></div>
<div class="abs" style="left:867.3px;top:235.200px;width:8.800px;height:8.800px;border-radius:50%;background:#fff;border:1px solid #d4d4d4"></div>
<div class="abs" style="left:965.10px;top:231.00px;width:23.60px;height:16.60px;background:#fff;border:1px solid #e5e5e5;border-radius:3px;"></div>
<span class="t" style="left:969.50px;top:234.20px;font-size:9.00px;color:#4a4a4a;font-weight:400;">0</span>
<div class="abs" style="left:992.30px;top:231.00px;width:24.20px;height:16.60px;background:#fff;border:1px solid #e5e5e5;border-radius:3px;"></div>
<svg style="left:998.90px;top:234.20px;" width="11.00" height="10.80" viewBox="0 0 11 10.800"><g fill="none" stroke="#555" stroke-width="0.850"><path d="M0 1.800H7.200M0 5.400H1.400M4.600 5.400H9M0 9H7.200"/><circle cx="8.800" cy="1.800" r="1.500" fill="#fff"/><circle cx="3" cy="5.400" r="1.500" fill="#fff"/><circle cx="8.800" cy="9" r="1.500" fill="#fff"/></g></svg>
<div class="abs" style="left:818.30px;top:253.00px;width:198.50px;height:1.00px;background:#e8e8e8;"></div>
<span class="t" style="left:818.80px;top:262.00px;font-size:9.00px;color:#4a4a4a;font-weight:400;letter-spacing:-0.168px;">Opacity</span>
<div class="abs" style="left:869.4px;top:266px;width:106.300px;height:3.300px;border-radius:1.650px;background:linear-gradient(90deg,#e9e9e9 0%,#d6d6d6 28%,#dba3b3 50%,#d6486f 74%,#d1365f 100%)"></div>
<div class="abs" style="left:976.100px;top:265.300px;width:4.800px;height:4.800px;border-radius:50%;background:#d1365f;box-shadow:0 0 0 0.800px #fff"></div>
<div class="abs" style="left:988.70px;top:259.40px;width:27.80px;height:16.20px;background:#fff;border:1px solid #e5e5e5;border-radius:3px;"></div>
<span class="t" style="left:993.20px;top:261.60px;font-size:8.60px;color:#4a4a4a;font-weight:400;letter-spacing:-0.598px;">100%</span>
<span class="t" style="left:818.80px;top:284.00px;font-size:9.00px;color:#4a4a4a;font-weight:400;letter-spacing:-0.247px;">Blending</span>
<div class="abs" style="left:868.40px;top:280.80px;width:148.10px;height:16.60px;background:#fff;border:1px solid #e5e5e5;border-radius:3px;"></div>
<span class="t" style="left:876.30px;top:284.00px;font-size:9.00px;color:#4a4a4a;font-weight:400;letter-spacing:-0.261px;">Normal</span>
<svg style="left:1005.70px;top:288.50px;" width="5.20" height="3.00" viewBox="0 0 5.2 3"><path d="M0 0h5.2L2.600 3z" fill="#bdbdbd"/></svg>
<span class="t" style="left:818.80px;top:306.00px;font-size:9.00px;color:#4a4a4a;font-weight:400;letter-spacing:-0.202px;">Style</span>
<div class="abs" style="left:868.40px;top:303.00px;width:108.10px;height:16.30px;background:#fff;border:1px solid #e5e5e5;border-radius:3px;"></div>
<span class="t" style="left:876.30px;top:305.60px;font-size:9.00px;color:#4a4a4a;font-weight:400;letter-spacing:-0.259px;">No shared style</span>
<svg style="left:965.80px;top:310.30px;" width="5.20" height="3.00" viewBox="0 0 5.2 3"><path d="M0 0h5.2L2.600 3z" fill="#bdbdbd"/></svg>
<div class="abs" style="left:981.00px;top:303.00px;width:35.50px;height:16.30px;background:#fff;border:1px solid #ececec;border-radius:3px;"></div>
<span class="t" style="left:989.50px;top:305.60px;font-size:9.00px;color:#b9b9b9;font-weight:400;letter-spacing:-0.569px;">Sync</span>
<div class="abs" style="left:811.00px;top:327.40px;width:213.00px;height:23.20px;background:#eeeeee;"></div>
<div class="abs" style="left:811.00px;top:327.00px;width:213.00px;height:1.00px;background:#dcdcdc;"></div>
<div class="abs" style="left:811.00px;top:350.30px;width:213.00px;height:1.00px;background:#e2e2e2;"></div>
<span class="t" style="left:815.00px;top:332.80px;font-size:9.00px;color:#4a4a4a;font-weight:400;letter-spacing:0.126px;">Fills</span>
<svg style="left:839.60px;top:337.70px;" width="5.20" height="3.00" viewBox="0 0 5.2 3"><path d="M0 0h5.2L2.600 3z" fill="#555"/></svg>
<svg style="left:972.00px;top:333.70px;" width="11.00" height="10.80" viewBox="0 0 11 10.800"><g fill="none" stroke="#555" stroke-width="0.850"><path d="M0 1.800H7.200M0 5.400H1.400M4.600 5.400H9M0 9H7.200"/><circle cx="8.800" cy="1.800" r="1.500" fill="#fff"/><circle cx="3" cy="5.400" r="1.500" fill="#fff"/><circle cx="8.800" cy="9" r="1.500" fill="#fff"/></g></svg>
<svg style="left:990.20px;top:333.60px;overflow:hidden;" width="9.10" height="10.20" preserveAspectRatio="none" viewBox="0 0 8 9.400"><rect x="0" y="0.900" width="8" height="1.300" fill="#5e5e5e"/><rect x="2.500" y="0" width="3" height="1.200" fill="#5e5e5e"/><path d="M0.600 2.500H7.400L7 9.400H1z" fill="#666"/><path d="M2.900 3.300V8.700M5.100 3.300V8.700" stroke="#9c9c9c" stroke-width="0.650"/></svg>
<svg style="left:1006.90px;top:334.00px;" width="10.00" height="10.00" viewBox="-5 -5 10 10"><circle r="4.300" fill="none" stroke="#555" stroke-width="0.850"/><path d="M-2.300 0H2.300M0 -2.300V2.300" stroke="#555" stroke-width="0.900"/></svg>
<div class="abs" style="left:819.1px;top:353.7px;width:16.4px;height:16.4px;border-radius:50%;background:#429386;box-shadow:0 0 0 1px #e4e4e4"></div>
<div class="abs" style="left:831.6px;top:361.300px;width:10.800px;height:10.800px;border-radius:50%;background:#fff;border:1px solid #d2d2d2"></div>
<svg style="left:834.20px;top:363.90px;" width="5.60" height="5.60" viewBox="0 0 5.400 5.400"><path d="M0.300 5.100L0.700 3.500L3.700 0.500L4.900 1.700L1.900 4.700z" fill="#444" stroke="#444" stroke-width="0.500" stroke-linejoin="round"/></svg>
<div class="abs" style="left:847.20px;top:354.70px;width:122.30px;height:17.20px;background:#fff;border:1px solid #e5e5e5;border-radius:3px;"></div>
<span class="t" style="left:855.00px;top:357.60px;font-size:9.00px;color:#4a4a4a;font-weight:400;letter-spacing:-0.361px;">Normal</span>
<svg style="left:958.80px;top:362.10px;" width="5.20" height="3.00" viewBox="0 0 5.2 3"><path d="M0 0h5.2L2.600 3z" fill="#bdbdbd"/></svg>
<div class="abs" style="left:973.00px;top:354.70px;width:28.50px;height:17.20px;background:#fff;border:1px solid #e5e5e5;border-radius:3px;"></div>
<span class="t" style="left:977.90px;top:357.30px;font-size:8.60px;color:#4a4a4a;font-weight:400;letter-spacing:-0.598px;">100%</span>
<svg style="left:1006.40px;top:359.70px" width="9.70" height="6.60" viewBox="1 4.5 22 15.0" preserveAspectRatio="none"><path d="M12 4.500C7 4.500 2.730 7.610 1 12c1.730 4.390 6 7.500 11 7.500s9.270-3.110 11-7.500c-1.730-4.390-6-7.500-11-7.500zM12 17c-2.760 0-5-2.240-5-5s2.240-5 5-5 5 2.240 5 5-2.240 5-5 5zm0-8c-1.660 0-3 1.340-3 3s1.340 3 3 3 3-1.340 3-3-1.340-3-3-3z" fill="#505050"/></svg>
<div class="abs" style="left:811.00px;top:375.20px;width:213.00px;height:46.20px;background:#eeeeee;"></div>
<div class="abs" style="left:811.00px;top:375.00px;width:213.00px;height:1.00px;background:#dcdcdc;"></div>
<div class="abs" style="left:811.00px;top:398.00px;width:213.00px;height:1.00px;background:#dcdcdc;"></div>
<div class="abs" style="left:811.00px;top:421.00px;width:213.00px;height:1.00px;background:#dcdcdc;"></div>
<span class="t" style="left:815.00px;top:381.00px;font-size:9.00px;color:#4a4a4a;font-weight:400;letter-spacing:0.165px;">Borders</span>
<svg style="left:1006.90px;top:382.20px;" width="10.00" height="10.00" viewBox="-5 -5 10 10"><circle r="4.300" fill="none" stroke="#555" stroke-width="0.850"/><path d="M-2.300 0H2.300M0 -2.300V2.300" stroke="#555" stroke-width="0.900"/></svg>
<span class="t" style="left:815.00px;top:404.00px;font-size:9.00px;color:#4a4a4a;font-weight:400;letter-spacing:0.326px;">Effects</span>
<svg style="left:852.80px;top:408.80px;" width="5.20" height="3.00" viewBox="0 0 5.2 3"><path d="M0 0h5.2L2.600 3z" fill="#555"/></svg>
<svg style="left:1006.90px;top:405.20px;" width="10.00" height="10.00" viewBox="-5 -5 10 10"><circle r="4.300" fill="none" stroke="#555" stroke-width="0.850"/><path d="M-2.300 0H2.300M0 -2.300V2.300" stroke="#555" stroke-width="0.900"/></svg>
<span class="t" style="left:818.80px;top:424.10px;font-size:9.00px;color:#4a4a4a;font-weight:400;letter-spacing:-0.168px;">Blur</span>
<svg style="left:1009.10px;top:428.90px;" width="4.80" height="4.80" viewBox="0 0 4.800 4.800"><path d="M2.400 0V4.800M0 2.400H4.800" stroke="#444" stroke-width="0.900"/></svg>
<div class="abs" style="left:811.50px;top:438.80px;width:213.00px;height:1.00px;background:#e8e8e8;"></div>
<span class="t" style="left:818.80px;top:442.10px;font-size:9.00px;color:#4a4a4a;font-weight:400;letter-spacing:0.134px;">Color Adjust</span>
<svg style="left:1009.10px;top:446.90px;" width="4.80" height="4.80" viewBox="0 0 4.800 4.800"><path d="M2.400 0V4.800M0 2.400H4.800" stroke="#444" stroke-width="0.900"/></svg>
<div class="abs" style="left:811.50px;top:456.20px;width:213.00px;height:1.00px;background:#e8e8e8;"></div>
<span class="t" style="left:818.80px;top:459.80px;font-size:9.00px;color:#4a4a4a;font-weight:400;letter-spacing:-0.033px;">Drop Shadow</span>
<svg style="left:1009.10px;top:464.60px;" width="4.80" height="4.80" viewBox="0 0 4.800 4.800"><path d="M2.400 0V4.800M0 2.400H4.800" stroke="#444" stroke-width="0.900"/></svg>
<div class="abs" style="left:811.50px;top:473.90px;width:213.00px;height:1.00px;background:#e8e8e8;"></div>
<span class="t" style="left:818.80px;top:477.50px;font-size:9.00px;color:#4a4a4a;font-weight:400;letter-spacing:-0.030px;">Inner Shadow</span>
<svg style="left:1009.10px;top:482.30px;" width="4.80" height="4.80" viewBox="0 0 4.800 4.800"><path d="M2.400 0V4.800M0 2.400H4.800" stroke="#444" stroke-width="0.900"/></svg>
<div class="abs" style="left:811.50px;top:491.90px;width:213.00px;height:1.00px;background:#e8e8e8;"></div>
<span class="t" style="left:818.80px;top:495.00px;font-size:9.00px;color:#4a4a4a;font-weight:400;letter-spacing:-0.101px;">More</span>
<svg style="left:1009.10px;top:499.80px;" width="4.80" height="4.80" viewBox="0 0 4.800 4.800"><path d="M2.400 0V4.800M0 2.400H4.800" stroke="#444" stroke-width="0.900"/></svg>
<div class="abs" style="left:811.50px;top:509.90px;width:213.00px;height:1.00px;background:#e8e8e8;"></div>
</div>
</body>
</html>
